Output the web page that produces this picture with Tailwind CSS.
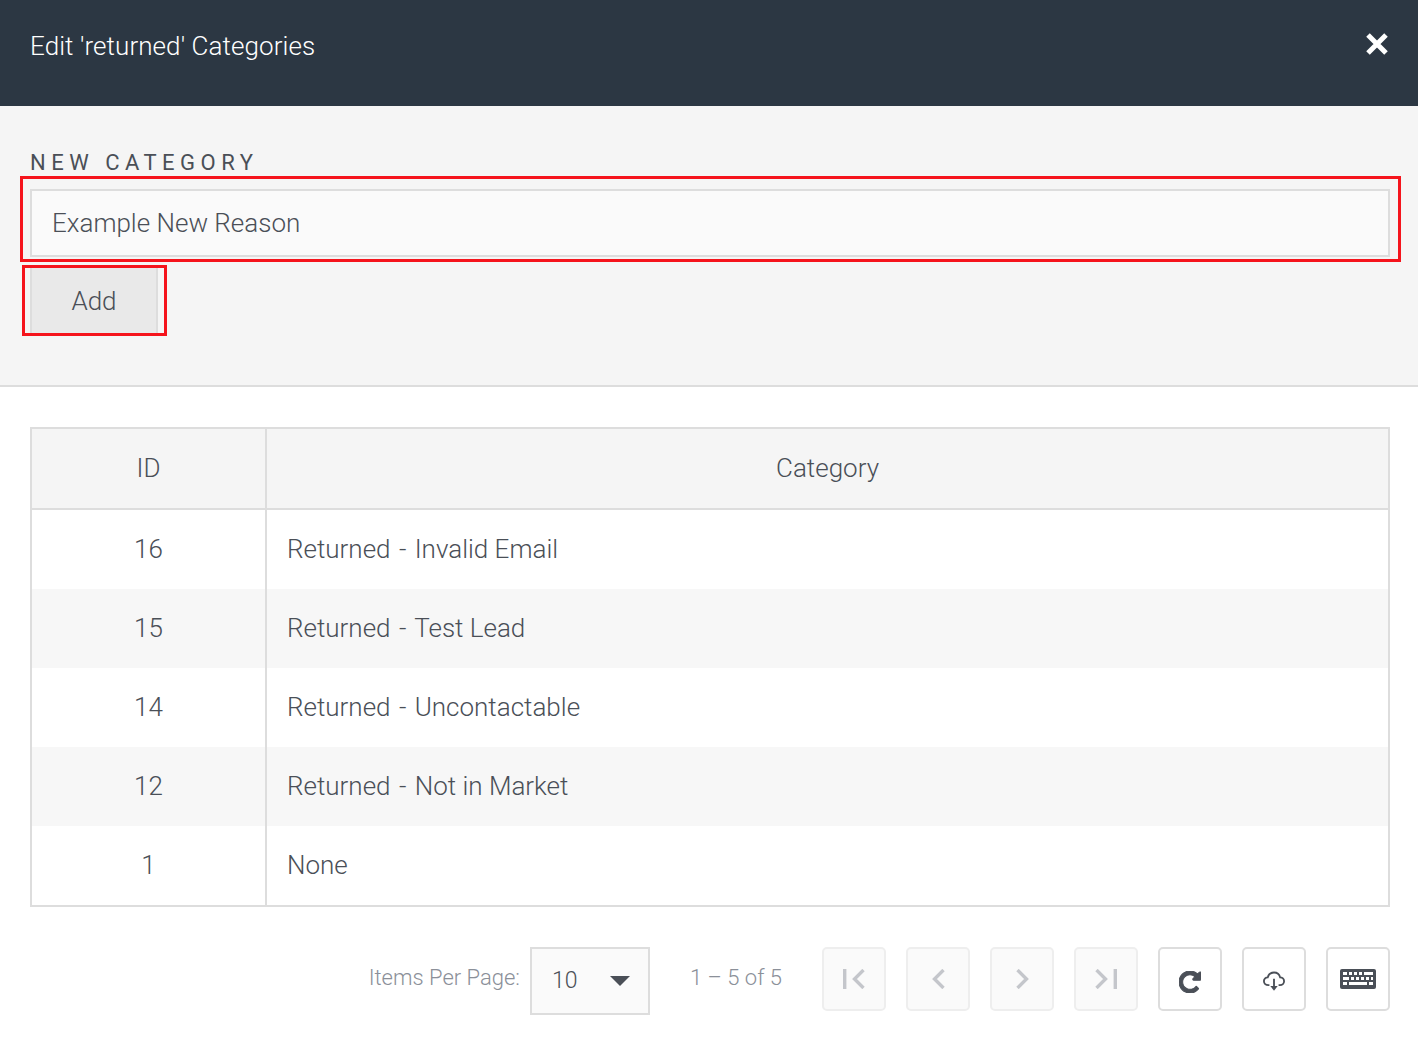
<!DOCTYPE html>
<html lang="en">

<head>
    <meta charset="UTF-8" />
    <meta name="viewport" content="width=device-width, initial-scale=1.0" />
    <script src="https://cdn.jsdelivr.net/npm/@tailwindcss/browser@4"></script>
    <title>Edit Categories</title>
</head>

<body class="bg-white text-[#4a4f57] font-['Roboto',sans-serif] font-light min-h-screen">

    <header class="h-[106px] bg-[#2c3743] text-white flex justify-between pl-[30px] pr-[30px] pt-[28px]">
        <h1 class="text-[26px] leading-[36px] font-light tracking-[0.08px]">Edit 'returned' Categories</h1>
        <button class="w-[22px] h-[22px] mt-[5px]">
            <svg viewBox="0 0 22 22" class="w-[22px] h-[22px]" fill="none" stroke="white" stroke-width="5">
                <path d="M2 2 L20 20 M20 2 L2 20" />
            </svg>
        </button>
    </header>

    <section class="h-[281px] bg-[#f5f5f5] border-b-2 border-[#dddddd] pl-[30px] pr-[28px] pt-[44px]">
        <label for="category" class="block text-[22px] leading-[25px] font-normal tracking-[5.5px] text-[#4a4f57]">NEW CATEGORY</label>
        <div class="relative mt-[14px]">
            <input id="category" value="Example New Reason"
                class="block w-full h-[68px] bg-[#fafafa] border-2 border-[#dddddd] px-[20px] text-[26px] font-light text-[#4a4f57]">
            <div class="absolute -left-[10px] -right-[11px] -top-[13px] -bottom-[5px] border-[3px] border-[#f5141c]"></div>
        </div>
        <div class="relative mt-[10px] w-[128px]">
            <button class="block w-[128px] h-[67px] pt-[2px] bg-[#e9e9e9] border-x-2 border-[#dddddd] text-[26px] font-light">Add</button>
            <div class="absolute -left-[8px] -right-[9px] -top-[2px] -bottom-[2px] border-[3px] border-[#f5141c]"></div>
        </div>
    </section>

    <main class="pl-[30px] pr-[28px] pt-[40px]">
        <table class="w-full table-fixed border-separate border-spacing-0 border-2 border-[#dddddd] text-[26px] font-light">
            <thead>
                <tr class="h-[81px] bg-[#f5f5f5]">
                    <th class="w-[235px] font-light border-r-2 border-b-2 border-[#dddddd]">ID</th>
                    <th class="font-light border-b-2 border-[#dddddd]">Category</th>
                </tr>
            </thead>
            <tbody>
                <tr class="h-[79px]">
                    <td class="text-center border-r-2 border-[#dddddd]">16</td>
                    <td class="pl-[20px]">Returned <span class="mx-[2px]">-</span> Invalid Email</td>
                </tr>
                <tr class="h-[79px] bg-[#f7f7f7]">
                    <td class="text-center border-r-2 border-[#dddddd]">15</td>
                    <td class="pl-[20px]">Returned <span class="mx-[2px]">-</span> Test Lead</td>
                </tr>
                <tr class="h-[79px]">
                    <td class="text-center border-r-2 border-[#dddddd]">14</td>
                    <td class="pl-[20px]">Returned <span class="mx-[2px]">-</span> Uncontactable</td>
                </tr>
                <tr class="h-[79px] bg-[#f7f7f7]">
                    <td class="text-center border-r-2 border-[#dddddd]">12</td>
                    <td class="pl-[20px]">Returned <span class="mx-[2px]">-</span> Not in Market</td>
                </tr>
                <tr class="h-[79px]">
                    <td class="text-center border-r-2 border-[#dddddd]">1</td>
                    <td class="pl-[20px]">None</td>
                </tr>
            </tbody>
        </table>

        <div class="mt-[40px] flex items-start justify-end">
            <span class="text-[22px] leading-[62px] text-[#8b9099] mr-[10px]">Items Per Page:</span>
            <div class="w-[120px] h-[68px] bg-[#fafafa] border-2 border-[#dddddd] flex items-center justify-between pl-[20px] pr-[18px]">
                <span class="text-[23px] font-light">10</span>
                <svg viewBox="0 0 20 10" class="w-[20px] h-[10px]" fill="#4a4f57"><path d="M0 0 H20 L10 10 Z" /></svg>
            </div>
            <span class="text-[22px] leading-[62px] text-[#8b9099] ml-[40px] mr-[40px]">1 – 5 of 5</span>

            <div class="flex gap-[20px]">
                <button class="w-[64px] h-[64px] rounded-[5px] bg-[#fafafa] border-2 border-[#eeeeee] flex items-center justify-center">
                    <svg viewBox="0 0 22 20" class="w-[22px] h-[20px]" fill="none" stroke="#c4c6cb" stroke-width="3.4">
                        <path d="M1.7 0 V20 M20.5 1 L11.5 10 L20.5 19" />
                    </svg>
                </button>
                <button class="w-[64px] h-[64px] rounded-[5px] bg-[#fafafa] border-2 border-[#eeeeee] flex items-center justify-center">
                    <svg viewBox="0 0 13 20" class="w-[13px] h-[20px]" fill="none" stroke="#c4c6cb" stroke-width="3.4">
                        <path d="M11.5 1 L2.5 10 L11.5 19" />
                    </svg>
                </button>
                <button class="w-[64px] h-[64px] rounded-[5px] bg-[#fafafa] border-2 border-[#eeeeee] flex items-center justify-center">
                    <svg viewBox="0 0 13 20" class="w-[13px] h-[20px]" fill="none" stroke="#c4c6cb" stroke-width="3.4">
                        <path d="M1.5 1 L10.5 10 L1.5 19" />
                    </svg>
                </button>
                <button class="w-[64px] h-[64px] rounded-[5px] bg-[#fafafa] border-2 border-[#eeeeee] flex items-center justify-center">
                    <svg viewBox="0 0 22 20" class="w-[22px] h-[20px]" fill="none" stroke="#c4c6cb" stroke-width="3.4">
                        <path d="M20.3 0 V20 M1.5 1 L10.5 10 L1.5 19" />
                    </svg>
                </button>
                <button class="w-[64px] h-[64px] rounded-[5px] bg-white border-2 border-[#dddddd] flex items-center justify-center">
                    <svg viewBox="0 0 1536 1536" class="w-[22px] h-[22px] mt-[6px]" fill="#4a4f57" stroke="#4a4f57" stroke-width="70">
                        <path d="M1536 128v448q0 26-19 45t-45 19h-448q-42 0-59-40-17-39 14-69l138-138q-148-137-349-137-104 0-198.5 40.5t-163.5 109.5-109.5 163.5-40.5 198.5 40.5 198.5 109.5 163.5 163.5 109.5 198.5 40.5q119 0 225-52t179-147q7-10 23-12 15 0 25 9l137 138q9 8 9.5 20.5t-7.5 22.5q-109 132-264 204.5t-327 72.5q-156 0-298-61t-245-164-164-245-61-298 61-298 164-245 245-164 298-61q147 0 284.5 55.5t244.5 156.5l130-129q29-31 70-14 39 17 39 59z" />
                    </svg>
                </button>
                <button class="w-[64px] h-[64px] rounded-[5px] bg-white border-2 border-[#dddddd] flex items-center justify-center">
                    <svg viewBox="0 0 24 22" class="w-[22px] h-[21px] mt-[4px]" fill="none" stroke="#4a4f57" stroke-width="2">
                        <path d="M7 15 H6 C3 15 1 13 1 10.5 C1 8 3 6.4 5.2 6.5 C6 3.3 8.7 1.2 12 1.2 C15.5 1.2 18 3.5 18.7 6.5 C21 6.5 23 8.3 23 10.7 C23 13 21 15 18.5 15 H17" />
                        <path d="M12 8 V19" />
                        <path d="M8 16 L12 21 L16 16 Z" fill="#4a4f57" stroke="none" />
                    </svg>
                </button>
                <button class="w-[64px] h-[64px] rounded-[5px] bg-white border-2 border-[#dddddd] flex items-center justify-center">
                    <svg viewBox="0 0 36 20" class="w-[36px] h-[20px]">
                        <rect width="36" height="20" rx="2" fill="#4a4f57" />
                        <path fill="white" d="M3 3h4v3H3zM9 3h3v3H9zM14 3h3v3h-3zM19 3h3v3h-3zM24 3h9v3h-9zM3 8h6v3H3zM11 8h3v3h-3zM16 8h3v3h-3zM21 8h3v3h-3zM26 8h3v3h-3zM31 8h2v3h-2zM3 13h4v3H3zM9 13h18v3H9zM29 13h4v3h-4z" />
                    </svg>
                </button>
            </div>
        </div>
    </main>

</body>

</html>
